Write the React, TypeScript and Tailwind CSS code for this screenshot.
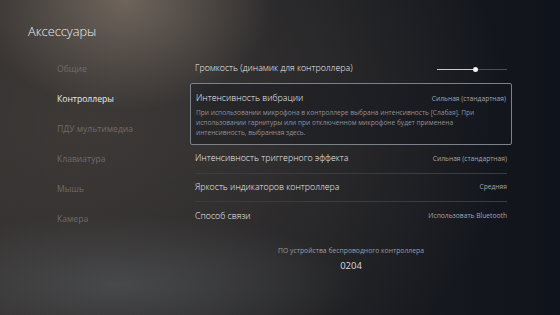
import React from "react";

const nav = [
  { name: "Общие", active: false },
  { name: "Контроллеры", active: true },
  { name: "ПДУ мультимедиа", active: false },
  { name: "Клавиатура", active: false },
  { name: "Мышь", active: false },
  { name: "Камера", active: false },
];

const rows = [
  { label: "Интенсивность триггерного эффекта", value: "Сильная (стандартная)" },
  { label: "Яркость индикаторов контроллера", value: "Средняя" },
  { label: "Способ связи", value: "Использовать Bluetooth" },
];

function Slider() {
  return (
    <div className="relative w-[70px] h-[6px] flex items-center">
      <div className="h-px w-[39px] bg-[#c9c9cc]" />
      <div className="h-px flex-1 bg-[#4a4e57]" />
      <div className="absolute left-[36px] top-[0.5px] w-[5px] h-[5px] rounded-full bg-[#f2f2f2]" />
    </div>
  );
}

export default function App() {
  return (
    <div
      className="relative w-[560px] h-[315px] overflow-hidden text-white font-['Open_Sans','Noto_Sans',sans-serif] bg-[#13161d] bg-[radial-gradient(ellipse_150px_110px_at_125px_0px,rgba(125,113,102,0.8),transparent),radial-gradient(ellipse_240px_70px_at_120px_285px,rgba(90,94,98,0.55),transparent),radial-gradient(ellipse_420px_330px_at_90px_120px,rgba(62,58,56,0.95),transparent),linear-gradient(90deg,#2c2a2a_0%,#1d1e22_55%,#0f131b_100%)]"
    >
      {/* Title */}
      <div className="pl-[28px] pt-[23px] text-[12.8px] leading-[16px] font-light text-[#ececed]">
        Аксессуары
      </div>

      <div className="flex mt-[14px]">
        {/* Left nav */}
        <ul className="w-[190px] shrink-0 pl-[57px] pt-[1px]">
          {nav.map((n) => (
            <li
              key={n.name}
              className={
                "h-[30px] flex items-center text-[8.6px] whitespace-nowrap " +
                (n.active ? "text-[#ececec]" : "text-[#6e6b6a]")
              }
            >
              {n.name}
            </li>
          ))}
        </ul>

        {/* Settings list */}
        <div className="w-[322px] shrink-0 pt-[2px]">
          <div className="h-[28px] flex items-center justify-between px-[5px]">
            <span className="text-[8.8px] font-light text-[#eeeff1]">Громкость (динамик для контроллера)</span>
            <Slider />
          </div>

          <div className="h-[62px] border border-[#7d818a] rounded-[2px] bg-[#14171d]/40 px-[5px] pt-[8px]">
            <div className="flex items-center justify-between h-[14px]">
              <span className="text-[8.8px] font-light text-[#eeeff1]">Интенсивность вибрации</span>
              <span className="text-[6.7px] text-[#a3a6ad]">Сильная (стандартная)</span>
            </div>
            <p className="mt-[2px] pr-[20px] text-[6.6px] leading-[10px] text-[#8e9097]">
              При использовании микрофона в контроллере выбрана интенсивность [Слабая]. При
              использовании гарнитуры или при отключенном микрофоне будет применена
              интенсивность, выбранная здесь.
            </p>
          </div>

          <div className="px-[5px]">
            {rows.map((r, i) => (
              <div
                key={r.label}
                className={
                  "h-[28.5px] flex items-center justify-between " +
                  (i < rows.length - 1 ? "border-b border-[#3a3c42]" : "")
                }
              >
                <span className="text-[8.8px] font-light text-[#eeeff1]">{r.label}</span>
                <span className="text-[6.7px] text-[#a3a6ad]">{r.value}</span>
              </div>
            ))}
          </div>

          <div className="mt-[15px] flex flex-col items-center">
            <span className="text-[6.8px] text-[#9a9ca3]">ПО устройства беспроводного контроллера</span>
            <span className="mt-[3px] text-[9.5px] text-[#d8d9dc]">0204</span>
          </div>
        </div>
      </div>
    </div>
  );
}
